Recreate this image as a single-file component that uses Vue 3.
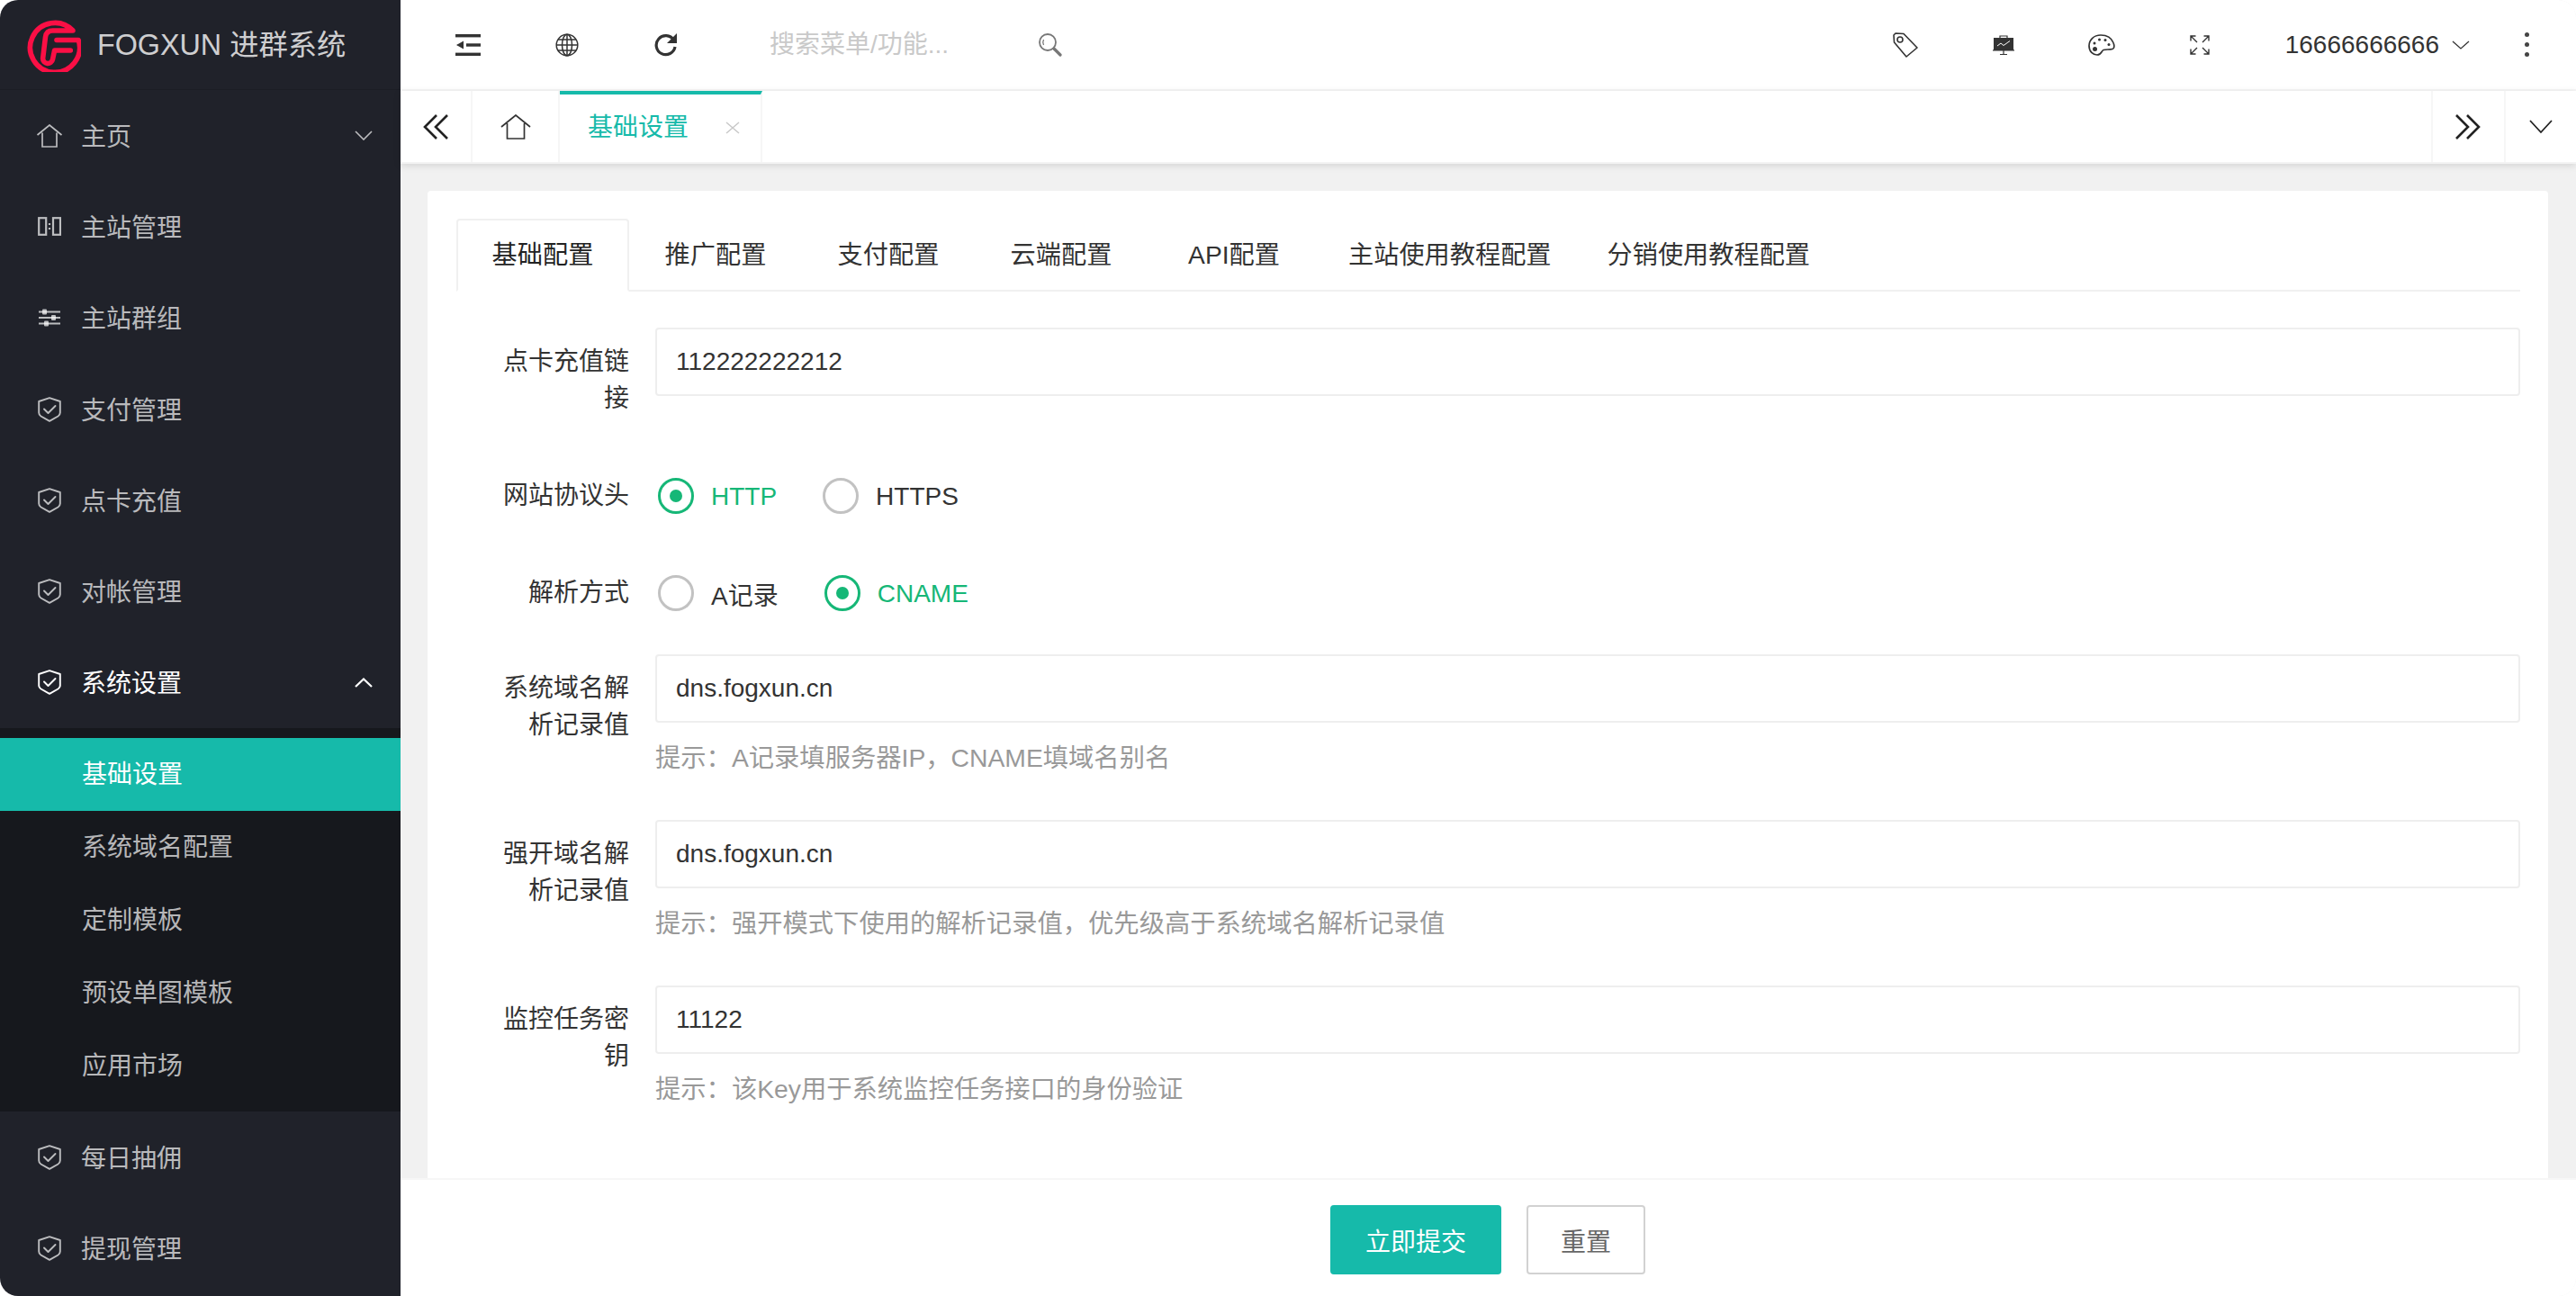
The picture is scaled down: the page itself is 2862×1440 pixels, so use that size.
<template>
  <div class="admin-shell">
    <aside class="sidebar">
      <div class="logo">
        <svg class="logo-mark" viewBox="0 0 60 60">
          <path d="M48.3 36H30.6L28.500 46A5.500 5.500 0 0 1 17.600 45L20.500 21Q21.500 14 28.500 14H51A27.500 27.500 0 1 0 57.200 24.500H33" fill="none" stroke="#fb0f45" stroke-width="5.600" stroke-linecap="round" stroke-linejoin="round" />
        </svg>
        <span class="logo-text">FOGXUN 进群系统</span>
      </div>
      <template v-for="item in menu" :key="item.name">
        <div class="menu-row" :class="{ open: item.open }">
          <span class="menu-icon">
            <svg v-if="item.icon === 'home'" width="30" height="26" viewBox="0 0 30 26" fill="none" stroke="currentColor" stroke-width="1.7">
              <path d="M1.500 12 15 1 28.500 12M7 9.500V25H23V9.500" />
            </svg>
            <svg v-else-if="item.icon === 'columns'" width="26" height="21" viewBox="0 0 26 21" fill="none" stroke="currentColor" stroke-width="2.200">
              <rect x="1.200" y="1.200" width="8" height="18.600" />
              <rect x="17" y="1.200" width="8" height="18.600" />
              <path d="M13 7v2M13 12v2" />
            </svg>
            <svg v-else-if="item.icon === 'sliders'" width="24" height="20" viewBox="0 0 24 20" fill="currentColor">
              <rect y="2.500" width="24" height="2" /><rect y="9" width="24" height="2" /><rect y="15.500" width="24" height="2" />
              <rect x="4" y="0.500" width="5" height="6" rx="1" /><rect x="14" y="7" width="5" height="6" rx="1" /><rect x="6" y="13.500" width="5" height="6" rx="1" />
            </svg>
            <svg v-else width="26" height="28" viewBox="0 0 26 28" fill="none" stroke="currentColor" stroke-width="1.900">
              <path d="M13 1.200 24.800 5V17.500Q24.800 20 22.500 21.500L13 26.800 3.500 21.500Q1.200 20 1.200 17.500V5Z" stroke-linejoin="round" />
              <path d="M7 13.500 11.500 18 19.500 10" stroke-linecap="round" stroke-linejoin="round" />
            </svg>
          </span>
          <span class="menu-label">{{ item.name }}</span>
          <svg v-if="item.arrow" class="menu-arrow" width="20" height="11" viewBox="0 0 20 11" fill="none" stroke="currentColor" :stroke-width="item.open ? 2.2 : 1.6">
            <path :d="item.open ? 'M1 10 10 1.500 19 10' : 'M1 1 10 10 19 1'" />
          </svg>
        </div>
        <div v-if="item.open" class="submenu">
          <div v-for="sub in subMenu" :key="sub" class="sub-row" :class="{ active: sub === '基础设置' }">{{ sub }}</div>
        </div>
      </template>
    </aside>

    <main class="main">
      <header class="topbar">
        <div class="tool">
          <svg width="28" height="24" viewBox="0 0 28 24" fill="#333">
            <rect width="28" height="3.400" /><rect x="12" y="10.300" width="16" height="3.400" /><rect y="20.600" width="28" height="3.400" />
            <path d="M1 12 9 7.500V16.500Z" />
          </svg>
        </div>
        <div class="tool">
          <svg width="26" height="26" viewBox="0 0 26 26" fill="none" stroke="#333" stroke-width="1.500">
            <circle cx="13" cy="13" r="11.800" />
            <ellipse cx="13" cy="13" rx="5.500" ry="11.800" />
            <path d="M13 1.200V24.800M1.200 13H24.800M3 7H23M3 19H23" />
          </svg>
        </div>
        <div class="tool">
          <svg width="28" height="26" viewBox="0 0 28 26" fill="none">
            <path d="M22.500 7.500A10.500 10.500 0 1 0 24 15" stroke="#333" stroke-width="3.200" />
            <path d="M26 0V11H15Z" fill="#333" />
          </svg>
        </div>
        <input class="search" type="text" placeholder="搜索菜单/功能..." />
        <svg class="search-icon" width="26" height="26" viewBox="0 0 26 26" fill="none" stroke="#777">
          <circle cx="10" cy="10" r="9" stroke-width="1.800" />
          <path d="M5.500 7Q4 10 5.500 13" stroke-width="1.300" />
          <path d="M17 17 24 24" stroke-width="3.200" stroke-linecap="round" />
        </svg>
        <div class="spacer"></div>
        <div class="tool tool-right">
          <svg width="28" height="28" viewBox="0 0 28 28" fill="none" stroke="#333" stroke-width="1.600" stroke-linejoin="round">
            <path d="M1 3 3 1 12 1.500 27 17 15 27 1.500 11Z" />
            <circle cx="8" cy="8" r="3" />
          </svg>
        </div>
        <div class="tool tool-right">
          <svg width="24" height="22" viewBox="0 0 24 22">
            <path d="M8 3V1H16V3" fill="none" stroke="#333" stroke-width="1.200" />
            <rect x="1" y="3" width="22" height="14" fill="#333" />
            <path d="M0 16.800H24M12 17V21M8 21.500H16" stroke="#333" stroke-width="1.200" />
            <path d="M5 12 9 9 12 11.500 19 6.500" fill="none" stroke="#fff" stroke-width="1" />
          </svg>
        </div>
        <div class="tool tool-right">
          <svg width="30" height="24" viewBox="0 0 30 24" fill="none" stroke="#333" stroke-width="1.700">
            <path d="M14 1C6 1 1 6.500 1 13 1 19.500 5.500 23 10 23 15 23 14.500 18.500 17 17.500 20 16.500 23 17.500 27 16.500 29 16 29.500 13 28 9.500 26 4.500 21 1 14 1Z" />
            <circle cx="7.500" cy="16.500" r="2.500" fill="#333" stroke="none" />
            <circle cx="7" cy="10" r="1.500" fill="#333" stroke="none" />
            <circle cx="12.500" cy="6" r="1.500" fill="#333" stroke="none" />
            <circle cx="19" cy="6.500" r="1.500" fill="#333" stroke="none" />
            <circle cx="23" cy="11.500" r="1.500" fill="#333" stroke="none" />
          </svg>
        </div>
        <div class="tool tool-right">
          <svg width="22" height="22" viewBox="0 0 22 22" fill="none" stroke="#333" stroke-width="1.400">
            <path d="M1 6.500V1H6.500M1 1 8 8M15.500 1H21V6.500M21 1 14 8M1 15.500V21H6.500M1 21 8 14M21 15.500V21H15.500M21 21 14 14" />
          </svg>
        </div>
        <div class="user">
          <span>16666666666</span>
          <svg width="20" height="10" viewBox="0 0 20 10" fill="none" stroke="#333" stroke-width="1.300"><path d="M1 1 10 9 19 1" /></svg>
        </div>
        <div class="dots"><i></i><i></i><i></i></div>
      </header>

      <nav class="tabbar">
        <div class="tab-btn left-btn">
          <svg width="28" height="28" viewBox="0 0 28 28" fill="none" stroke="#222" stroke-width="2.600">
            <path d="M15 1 2 14 15 27M27 1 14 14 27 27" />
          </svg>
        </div>
        <div class="tab-btn home-btn">
          <svg width="34" height="28" viewBox="0 0 34 28" fill="none" stroke="#333" stroke-width="1.700">
            <path d="M1 14 17 1 33 14M7.500 10V27H26.500V10" />
          </svg>
        </div>
        <div class="page-tab">
          <span>基础设置</span>
          <svg class="tab-close" width="16" height="14" viewBox="0 0 16 14" fill="none" stroke="#c8c8c8" stroke-width="1.500"><path d="M1 1 15 13M15 1 1 13" /></svg>
        </div>
        <div class="spacer"></div>
        <div class="tab-btn next-btn">
          <svg width="28" height="28" viewBox="0 0 28 28" fill="none" stroke="#222" stroke-width="2.600">
            <path d="M1 1 14 14 1 27M13 1 26 14 13 27" />
          </svg>
        </div>
        <div class="tab-btn more-btn">
          <svg width="26" height="16" viewBox="0 0 26 16" fill="none" stroke="#222" stroke-width="1.800"><path d="M1 1 13 14 25 1" /></svg>
        </div>
      </nav>

      <section class="content">
        <div class="card">
          <ul class="form-tabs">
            <li v-for="(t, i) in formTabs" :key="t" :class="{ active: i === 0 }">{{ t }}</li>
          </ul>

          <form class="form" @submit.prevent>
            <div class="form-row row-first">
              <label>点卡充值链接</label>
              <div class="field"><input type="text" value="112222222212" /></div>
            </div>

            <div class="form-row">
              <label>网站协议头</label>
              <div class="radios">
                <span class="radio checked"><i></i>HTTP</span>
                <span class="radio"><i></i>HTTPS</span>
              </div>
            </div>

            <div class="form-row row-tight">
              <label>解析方式</label>
              <div class="radios">
                <span class="radio"><i></i>A记录</span>
                <span class="radio checked"><i></i>CNAME</span>
              </div>
            </div>

            <div v-for="f in hintFields" :key="f.label" class="form-row">
              <label>{{ f.label }}</label>
              <div class="field">
                <input type="text" :value="f.value" />
                <p class="hint">{{ f.hint }}</p>
              </div>
            </div>
          </form>
        </div>
      </section>

      <footer class="footer">
        <button class="btn primary" type="button">立即提交</button>
        <button class="btn" type="button">重置</button>
      </footer>
    </main>
  </div>
</template>

<script setup>
const menu = [
  { name: '主页', icon: 'home', arrow: true },
  { name: '主站管理', icon: 'columns' },
  { name: '主站群组', icon: 'sliders' },
  { name: '支付管理', icon: 'shield' },
  { name: '点卡充值', icon: 'shield' },
  { name: '对帐管理', icon: 'shield' },
  { name: '系统设置', icon: 'shield', arrow: true, open: true },
  { name: '每日抽佣', icon: 'shield' },
  { name: '提现管理', icon: 'shield' }
]

const subMenu = ['基础设置', '系统域名配置', '定制模板', '预设单图模板', '应用市场']

const formTabs = ['基础配置', '推广配置', '支付配置', '云端配置', 'API配置', '主站使用教程配置', '分销使用教程配置']

const hintFields = [
  { label: '系统域名解析记录值', value: 'dns.fogxun.cn', hint: '提示：A记录填服务器IP，CNAME填域名别名' },
  { label: '强开域名解析记录值', value: 'dns.fogxun.cn', hint: '提示：强开模式下使用的解析记录值，优先级高于系统域名解析记录值' },
  { label: '监控任务密钥', value: '11122', hint: '提示：该Key用于系统监控任务接口的身份验证' }
]
</script>

<style>
html, body { background: #fff; margin: 0; }
</style>

<style scoped>
* { box-sizing: border-box; }
.admin-shell {
  display: flex;
  width: 2862px;
  height: 1440px;
  overflow: hidden;
  border-radius: 20px;
  font-family: "Liberation Sans", "Noto Sans CJK SC", sans-serif;
  font-size: 28px;
  color: #333;
  background: #f1f1f1;
}

.sidebar { width: 445px; flex: none; background: #20222a; color: rgba(255, 255, 255, 0.7); overflow: hidden; }
.logo {
  display: flex;
  align-items: center;
  height: 100px;
  padding-left: 30px;
  border-bottom: 1px solid #1b1d24;
  font-size: 32.300px;
  color: rgba(255, 255, 255, 0.8);
}
.logo-mark { width: 60px; height: 60px; margin-right: 18px; }
.logo-text { margin-top: -5px; }
.menu-row { display: flex; align-items: center; height: 101.300px; padding-left: 40px; }
.menu-row.open { color: #fff; }
.menu-label { margin-top: -2px; }
.menu-icon { display: flex; justify-content: center; width: 30px; margin-right: 20px; }
.menu-arrow { margin-left: auto; margin-right: 31px; }
.submenu { padding: 11px 0 10px; background: #16181d; }
.sub-row { height: 81px; line-height: 81px; padding-left: 91px; }
.sub-row.active { background: #16baaa; color: #fff; }

.main { flex: 1; min-width: 0; display: flex; flex-direction: column; }
.topbar { display: flex; align-items: center; flex: none; height: 101px; padding-left: 20px; background: #fff; border-bottom: 2px solid #f6f6f6; }
.tool { display: flex; justify-content: center; align-items: center; width: 110px; }
.tool-right { width: 109px; }
.search { width: 270px; margin-left: 60px; border: 0; outline: 0; padding: 0; font: inherit; background: transparent; }
.search::placeholder { color: #c9c9c9; opacity: 1; }
.search-icon { margin-left: 29px; }
.spacer { flex: 1; }
.user { display: flex; align-items: center; gap: 14px; margin-left: 40px; }
.dots { display: flex; flex-direction: column; gap: 6px; margin: 0 52px 0 61px; }
.dots i { display: block; width: 5px; height: 5px; border-radius: 50%; background: #444; }

.tabbar { position: relative; display: flex; flex: none; height: 81px; background: #fff; box-shadow: 0 2px 8px rgba(0, 0, 0, 0.12); border-bottom: 2px solid #f3f3f3; }
.tab-btn { display: flex; align-items: center; justify-content: center; background: #fff; }
.left-btn { width: 80px; border-right: 2px solid #f6f6f6; }
.home-btn { width: 97px; border-right: 2px solid #f6f6f6; }
.next-btn { width: 81px; padding-right: 2px; border-left: 2px solid #f6f6f6; }
.more-btn { width: 80px; border-left: 2px solid #f6f6f6; }
.page-tab { display: flex; align-items: center; width: 225px; padding: 0 0 8px 31px; border-top: 4px solid #16baaa; border-right: 2px solid #f6f6f6; color: #16baaa; }
.tab-close { margin: 6px 0 0 41px; }

.content { flex: 1; min-height: 0; padding: 30px 31px 0 30px; overflow: hidden; }
.card { height: 100%; padding: 31px 31px 0 32px; background: #fff; border-radius: 4px 4px 0 0; }
.form-tabs { display: flex; height: 81px; margin: 0; padding: 0; list-style: none; border-bottom: 2px solid #f0f0f0; font-size: 28.200px; }
.form-tabs li { min-width: 192px; height: 81px; padding: 0 31px; line-height: 81px; text-align: center; }
.form-tabs li.active { border: 2px solid #f0f0f0; border-bottom-color: #fff; border-radius: 4px 4px 0 0; color: #222; line-height: 77px; }

.form { padding-top: 40px; }
.form-row { display: flex; margin-bottom: 32px; }
.form-row label { flex: none; width: 192px; padding: 17px 0 0 31px; line-height: 41px; text-align: right; }
.row-first { min-height: 117px; }
.row-tight { margin-bottom: 30px; }
.field { flex: 1; min-width: 0; margin-left: 29px; }
.field input { display: block; width: 100%; height: 76px; padding: 0 21px; border: 2px solid #eee; border-radius: 4px; outline: 0; font: inherit; color: #333; }
.hint { margin: 0; padding: 19px 0 16px; line-height: 41px; color: #999; font-size: 28.300px; }

.radios { display: flex; align-items: center; height: 76px; margin-left: 32px; }
.radio { display: flex; align-items: center; margin-right: 51px; padding-top: 1px; }
.radio i { position: relative; display: block; width: 40px; height: 40px; margin: -1px 19px 0 0; border: 3px solid #c2c2c2; border-radius: 50%; }
.radio.checked { color: #16b777; }
.radio.checked i { border-color: #16b777; }
.radio.checked i::after { content: ""; position: absolute; left: 10px; top: 10px; width: 14px; height: 14px; border-radius: 50%; background: #16b777; }

.footer { display: flex; justify-content: center; align-items: center; flex: none; gap: 28px; height: 131px; padding: 4px 1px 0 0; background: #fff; border-top: 2px solid #f6f6f6; }
.btn { width: 132px; height: 77px; padding: 0; border: 2px solid #d2d2d2; border-radius: 4px; background: #fff; font: inherit; color: #666; }
.btn.primary { width: 190px; border-color: #16baaa; background: #16baaa; color: #fff; }
</style>
